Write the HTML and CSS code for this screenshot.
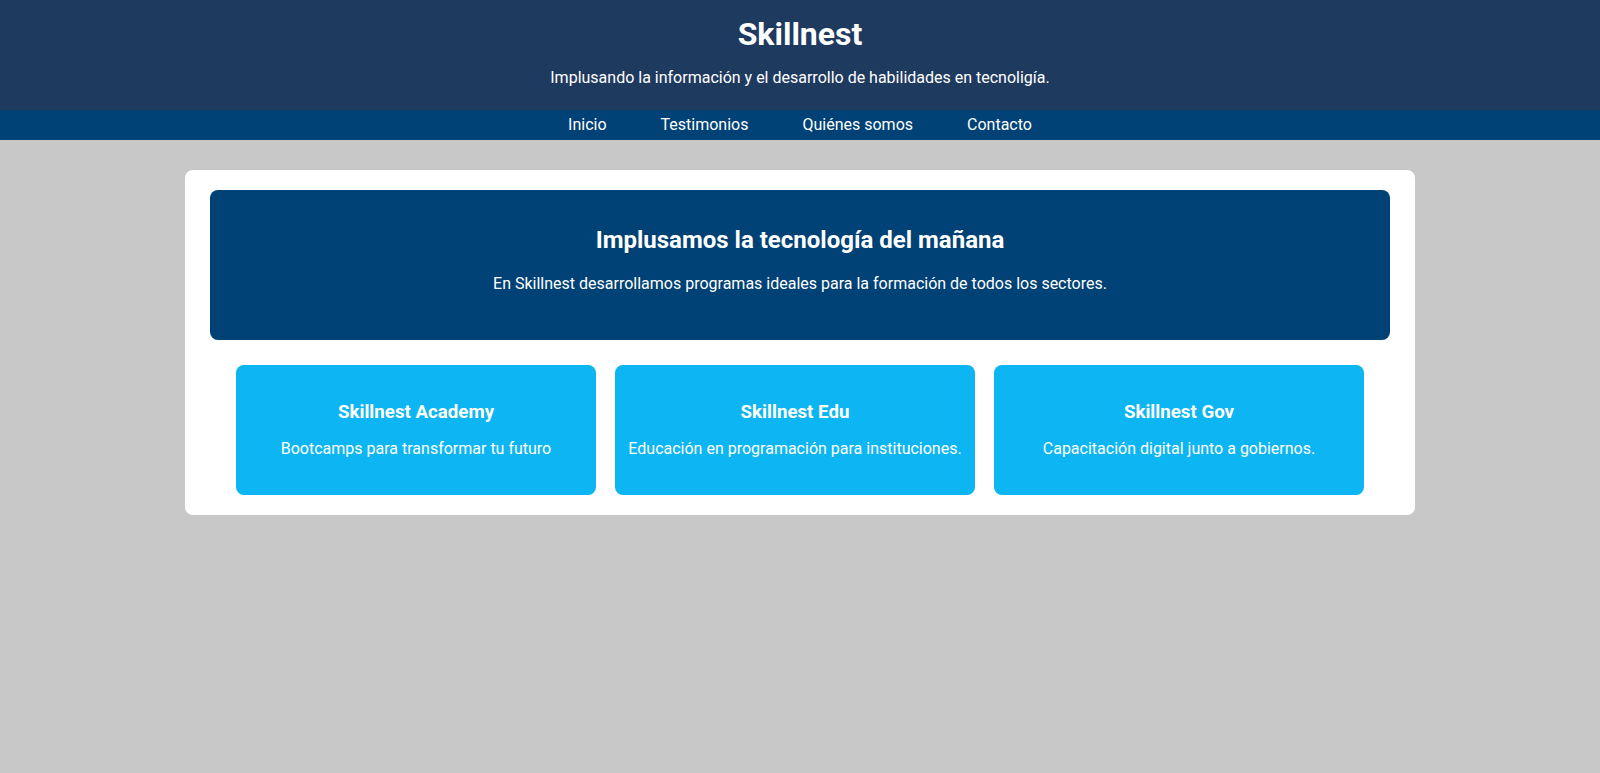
FILE: index.html
```html
<!DOCTYPE html>
<html lang="es">
<head>
<meta charset="utf-8">
<title>Skillnest</title>
<link rel="stylesheet" href="styles.css">
</head>
<body>
<header class="site-header">
  <h1 class="brand">Skillnest</h1>
  <p class="tagline">Implusando la información y el desarrollo de habilidades en tecnoligía.</p>
</header>
<nav class="site-nav">
  <a href="#">Inicio</a>
  <a href="#">Testimonios</a>
  <a href="#">Quiénes somos</a>
  <a href="#">Contacto</a>
</nav>
<main class="panel">
  <section class="hero">
    <h2 class="hero-title">Implusamos la tecnología del mañana</h2>
    <p class="hero-text">En Skillnest desarrollamos programas ideales para la formación de todos los sectores.</p>
  </section>
  <section class="cards">
    <article class="card">
      <h3 class="card-title">Skillnest Academy</h3>
      <p class="card-text">Bootcamps para transformar tu futuro</p>
    </article>
    <article class="card">
      <h3 class="card-title">Skillnest Edu</h3>
      <p class="card-text">Educación en programación para instituciones.</p>
    </article>
    <article class="card">
      <h3 class="card-title">Skillnest Gov</h3>
      <p class="card-text">Capacitación digital junto a gobiernos.</p>
    </article>
  </section>
</main>
</body>
</html>
```
FILE: styles.css
```css
* { box-sizing: border-box; }

body {
  margin: 0;
  background: #c8c8c8;
  font-family: Roboto, "Noto Sans", Arial, sans-serif;
  color: #ffffff;
}

.site-header {
  background: #1f3a5f;
  height: 110px;
  padding-top: 15px;
  text-align: center;
}

.brand {
  margin: 0;
  font-size: 32px;
  font-weight: 700;
  line-height: normal;
}

.tagline {
  margin: 15px 0 0;
  font-size: 16px;
  line-height: normal;
}

.site-nav {
  background: #004275;
  height: 30px;
  padding-bottom: 2px;
  display: flex;
  justify-content: center;
  align-items: center;
  gap: 54px;
}

.site-nav a {
  color: #ffffff;
  text-decoration: none;
  font-size: 16px;
  line-height: normal;
}

.panel {
  width: 1230px;
  margin: 30px auto 0;
  padding: 20px 25px 20px;
  background: #ffffff;
  border-radius: 8px;
}

.hero {
  background: #004275;
  border-radius: 8px;
  height: 150px;
  padding-top: 36px;
  text-align: center;
}

.hero-title {
  margin: 0;
  font-size: 24px;
  font-weight: 700;
  line-height: normal;
}

.hero-text {
  margin: 20px 0 0;
  font-size: 16px;
  line-height: normal;
}

.cards {
  margin-top: 25px;
  display: grid;
  grid-template-columns: 360px 360px 370px;
  justify-content: center;
  gap: 19px;
}

.card {
  background: #0db6f2;
  border-radius: 8px;
  height: 130px;
  padding-top: 36px;
  text-align: center;
}

.card-title {
  margin: 0;
  font-size: 18.72px;
  font-weight: 700;
  line-height: normal;
}

.card-text {
  margin: 15.5px 0 0;
  font-size: 16px;
  line-height: normal;
}
```
